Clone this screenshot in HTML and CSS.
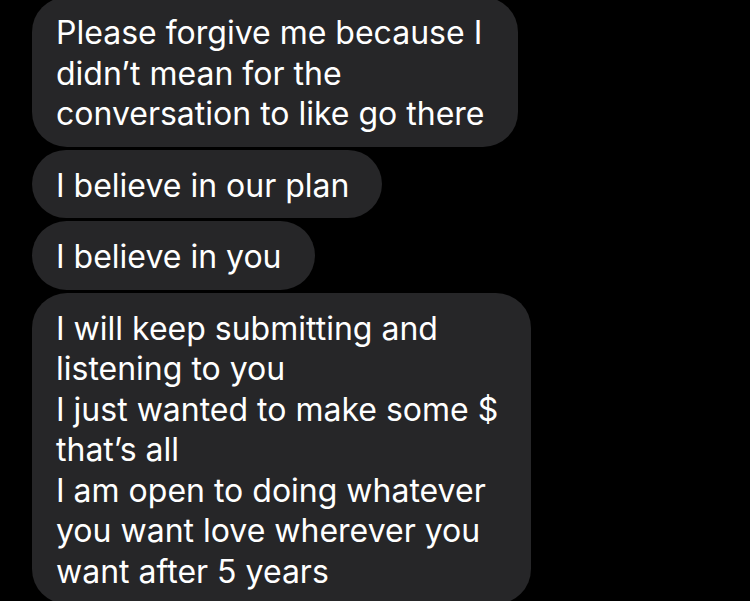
FILE: index.html
```html
<!DOCTYPE html>
<html lang="en">
<head>
<meta charset="utf-8">
<title>Messages</title>
<link rel="stylesheet" href="styles.css">
</head>
<body>
<div class="thread">
  <div class="bubble bubble-first">Please forgive me because I<br>didn’t mean for the<br>conversation to like go there</div>
  <div class="bubble">I believe in our plan</div>
  <div class="bubble">I believe in you</div>
  <div class="bubble">I will keep submitting and<br>listening to you<br>I just wanted to make some $<br>that’s all<br>I am open to doing whatever<br>you want love wherever you<br>want after 5 years</div>
</div>
</body>
</html>
```

FILE: styles.css
```css
html, body {
  margin: 0;
  padding: 0;
  background: #000;
  height: 601px;
  overflow: hidden;
}

.thread {
  display: flex;
  flex-direction: column;
  align-items: flex-start;
  gap: 3px;
  padding-left: 32px;
  margin-top: -3px;
}

.bubble {
  background: #262628;
  color: #fff;
  font-family: Inter, "Liberation Sans", sans-serif;
  font-size: 32px;
  line-height: 40.5px;
  padding: 16px 33px 12px 24px;
  border-radius: 35px;
  white-space: nowrap;
}
```
